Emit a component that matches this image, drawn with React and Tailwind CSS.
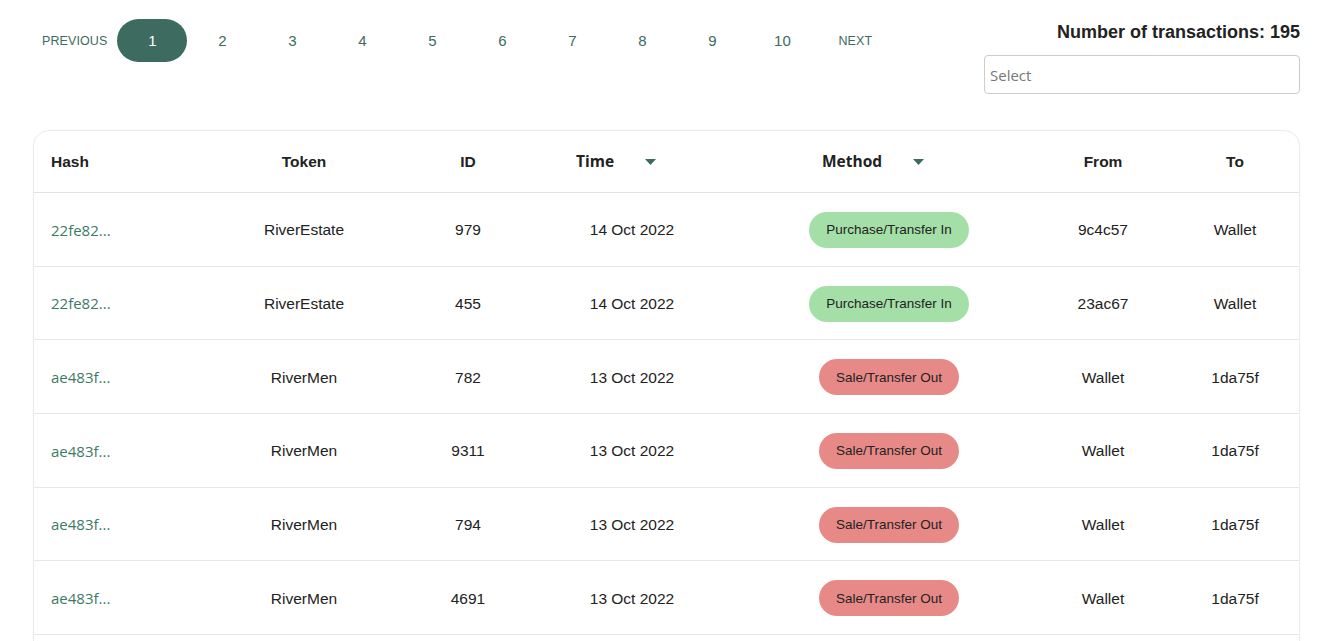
import React from "react";

const rows = [
  { hash: "22fe82...", token: "RiverEstate", id: "979", time: "14 Oct 2022", method: "in", from: "9c4c57", to: "Wallet" },
  { hash: "22fe82...", token: "RiverEstate", id: "455", time: "14 Oct 2022", method: "in", from: "23ac67", to: "Wallet" },
  { hash: "ae483f...", token: "RiverMen", id: "782", time: "13 Oct 2022", method: "out", from: "Wallet", to: "1da75f" },
  { hash: "ae483f...", token: "RiverMen", id: "9311", time: "13 Oct 2022", method: "out", from: "Wallet", to: "1da75f" },
  { hash: "ae483f...", token: "RiverMen", id: "794", time: "13 Oct 2022", method: "out", from: "Wallet", to: "1da75f" },
  { hash: "ae483f...", token: "RiverMen", id: "4691", time: "13 Oct 2022", method: "out", from: "Wallet", to: "1da75f" },
];

const cols = "grid grid-cols-[177px_186px_142px_184px_332px_96px_150px]";

function Arrow() {
  return (
    <svg width="11" height="6" viewBox="0 0 11 6" className="block">
      <path d="M0 0 L11 0 L5.5 6 Z" fill="#3d6b5f" />
    </svg>
  );
}

export default function App() {
  const pages = [1, 2, 3, 4, 5, 6, 7, 8, 9, 10];
  return (
    <div className="w-[1334px] h-[641px] overflow-hidden bg-white font-['Liberation_Sans',Arial,sans-serif] text-[#222]">
      <div className="flex justify-between pl-[33px] pr-[34px] pt-[19px]">
        <div className="flex items-start">
          <button className="h-[43px] pl-[9px] pr-[10px] pt-[1px] text-[12.5px] text-[#3d6b5f] tracking-[0.1px]">PREVIOUS</button>
          {pages.map((p) => (
            <button
              key={p}
              className={
                "h-[43px] w-[70px] rounded-full text-[15px] pt-[1px] flex items-center justify-center " +
                (p === 1 ? "bg-[#3d6b5f] text-white" : "text-[#3d6b5f]")
              }
            >
              {p}
            </button>
          ))}
          <button className="h-[43px] pl-[21px] pt-[1px] text-[12.5px] text-[#3d6b5f] tracking-[0.1px]">NEXT</button>
        </div>
        <div className="flex flex-col items-end">
          <div className="text-[18px] font-bold text-[#222] leading-[26px]">Number of transactions: 195</div>
          <div className="mt-[10px] w-[316px] h-[39px] border border-[#cccccc] rounded-[4px] flex items-center px-[5px] pt-[1px] text-[15px] text-[#777] font-['Open_Sans',sans-serif]">
            Select
          </div>
        </div>
      </div>

      <div className="mt-[36px] ml-[33px] w-[1267px] border border-[#ebebeb] rounded-t-[16px] shadow-[0_0_3px_rgba(0,0,0,0.03)]">
        <div className={cols + " h-[62px] items-center border-b border-[#e2e2e2] text-[15.5px] font-bold text-[#222]"}>
          <div className="pl-[17px]">Hash</div>
          <div className="text-center">Token</div>
          <div className="text-center">ID</div>
          <div className="flex items-center pl-[37px] gap-[31px] font-['Open_Sans',sans-serif] font-bold text-[15.5px]">
            <span>Time</span>
            <Arrow />
          </div>
          <div className="flex items-center pl-[99px] gap-[31px] font-['Open_Sans',sans-serif] font-bold text-[15.5px]">
            <span>Method</span>
            <Arrow />
          </div>
          <div className="text-center">From</div>
          <div className="text-center pl-[18px]">To</div>
        </div>
        {rows.map((r, i) => (
          <div
            key={i}
            className={cols + " h-[73.7px] items-center pt-[1px] text-[15.5px] text-[#222] border-b border-[#e6e6e6]"}
          >
            <div className="pl-[17px] text-[#3d7a66] font-['Open_Sans',sans-serif] text-[15px]">{r.hash}</div>
            <div className="text-center">{r.token}</div>
            <div className="text-center">{r.id}</div>
            <div className="text-center pl-[2px]">{r.time}</div>
            <div className="flex justify-center">
              {r.method === "in" ? (
                <span className="h-[36px] w-[160px] rounded-full bg-[#a4dfa8] pt-[1px] text-[13.5px] text-[#222] flex items-center justify-center">
                  Purchase/Transfer In
                </span>
              ) : (
                <span className="h-[36px] w-[140px] rounded-full bg-[#e78a87] pt-[1px] text-[13.5px] text-[#222] flex items-center justify-center">
                  Sale/Transfer Out
                </span>
              )}
            </div>
            <div className="text-center">{r.from}</div>
            <div className="text-center pl-[18px]">{r.to}</div>
          </div>
        ))}
        <div className="h-[74px]" />
      </div>
    </div>
  );
}
